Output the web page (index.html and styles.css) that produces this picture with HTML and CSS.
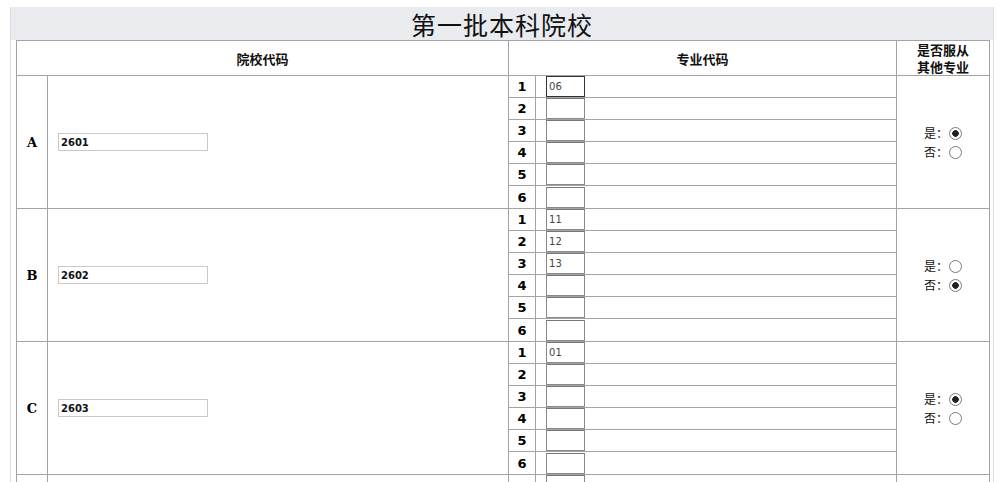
FILE: index.html
```html
<!DOCTYPE html>
<html>
<head>
    <title>第一批本科院校</title>
    <link rel="stylesheet" href="styles.css">
</head>
<body>
    <div class="panel">
        <div class="panel-title">第一批本科院校</div>
        <table class="volunteer">
            <colgroup>
                <col class="c-letter"><col class="c-school"><col class="c-num"><col class="c-major"><col class="c-obey">
            </colgroup>
            <tr class="head">
                <th colspan="2">院校代码</th>
                <th colspan="2">专业代码</th>
                <th>是否服从<br>其他专业</th>
            </tr>

            <!-- A -->
            <tr>
                <td rowspan="6" class="letter">A</td>
                <td rowspan="6" class="school"><input type="text" class="school-code" value="2601"></td>
                <td class="num">1</td>
                <td class="major"><input type="text" class="major-code focus" value="06"></td>
                <td rowspan="6" class="obey">
                    <div>是：<input type="radio" name="obeyA" checked></div>
                    <div>否：<input type="radio" name="obeyA"></div>
                </td>
            </tr>
            <tr><td class="num">2</td><td class="major"><input type="text" class="major-code"></td></tr>
            <tr><td class="num">3</td><td class="major"><input type="text" class="major-code"></td></tr>
            <tr><td class="num">4</td><td class="major"><input type="text" class="major-code"></td></tr>
            <tr><td class="num">5</td><td class="major"><input type="text" class="major-code"></td></tr>
            <tr class="last"><td class="num">6</td><td class="major"><input type="text" class="major-code"></td></tr>

            <!-- B -->
            <tr>
                <td rowspan="6" class="letter">B</td>
                <td rowspan="6" class="school"><input type="text" class="school-code" value="2602"></td>
                <td class="num">1</td>
                <td class="major"><input type="text" class="major-code" value="11"></td>
                <td rowspan="6" class="obey">
                    <div>是：<input type="radio" name="obeyB"></div>
                    <div>否：<input type="radio" name="obeyB" checked></div>
                </td>
            </tr>
            <tr><td class="num">2</td><td class="major"><input type="text" class="major-code" value="12"></td></tr>
            <tr><td class="num">3</td><td class="major"><input type="text" class="major-code" value="13"></td></tr>
            <tr><td class="num">4</td><td class="major"><input type="text" class="major-code"></td></tr>
            <tr><td class="num">5</td><td class="major"><input type="text" class="major-code"></td></tr>
            <tr class="last"><td class="num">6</td><td class="major"><input type="text" class="major-code"></td></tr>

            <!-- C -->
            <tr>
                <td rowspan="6" class="letter">C</td>
                <td rowspan="6" class="school"><input type="text" class="school-code" value="2603"></td>
                <td class="num">1</td>
                <td class="major"><input type="text" class="major-code" value="01"></td>
                <td rowspan="6" class="obey">
                    <div>是：<input type="radio" name="obeyC" checked></div>
                    <div>否：<input type="radio" name="obeyC"></div>
                </td>
            </tr>
            <tr><td class="num">2</td><td class="major"><input type="text" class="major-code"></td></tr>
            <tr><td class="num">3</td><td class="major"><input type="text" class="major-code"></td></tr>
            <tr><td class="num">4</td><td class="major"><input type="text" class="major-code"></td></tr>
            <tr><td class="num">5</td><td class="major"><input type="text" class="major-code"></td></tr>
            <tr class="last"><td class="num">6</td><td class="major"><input type="text" class="major-code"></td></tr>

            <!-- D (只露出顶部) -->
            <tr>
                <td rowspan="2" class="letter"></td>
                <td rowspan="2" class="school"></td>
                <td class="num"></td>
                <td class="major"><input type="text" class="major-code"></td>
                <td rowspan="2" class="obey"></td>
            </tr>
            <tr><td class="num"></td><td class="major"><input type="text" class="major-code"></td></tr>
        </table>
    </div>
</body>
</html>
```

FILE: styles.css
```css
body { margin: 0; background: #fff; font-family: "Noto Sans CJK SC", sans-serif; overflow: hidden; }

.panel { margin: 7px 0 0 10px; width: 982px; border-left: 1px solid #dcdee2; border-right: 1px solid #dcdee2; padding-bottom: 20px; }
.panel-title { height: 33px; background: #e9ebef; text-align: center; font-size: 25px; line-height: 35px; color: #111; letter-spacing: 1px; }

.volunteer { margin-left: 5px; width: 973px; border-collapse: collapse; table-layout: fixed; border: 1px solid #9a9a9a; }
.volunteer td, .volunteer th { border: 1px solid #a3a3a3; padding: 0; }
.c-letter { width: 31px; }
.c-school { width: 461px; }
.c-num { width: 27px; }
.c-major { width: 361px; }
.c-obey { width: 93px; }

.head th { height: 34px; font-size: 13px; font-weight: bold; color: #111; line-height: 17px; }

.volunteer td { height: 21px; }
.volunteer tr.last td { height: 22px; }
.letter { text-align: center; font-family: "DejaVu Serif", serif; font-weight: bold; font-size: 13px; }
.school { padding-left: 10px !important; }
.num { text-align: center; font-family: "DejaVu Sans", sans-serif; font-weight: bold; font-size: 13px; }
.major { padding-left: 10px !important; }

.school-code { width: 150px; height: 18px; box-sizing: border-box; border: 1px solid #c8c8c8; padding: 0 2px; margin: 0; font-family: "DejaVu Sans", sans-serif; font-weight: bold; font-size: 10px; color: #111; display: block; }
.major-code { width: 39px; height: 21px; box-sizing: border-box; border: 1px solid #8a8a8a; border-top-color: #777; padding: 0 2px; margin: 0; font-family: "DejaVu Sans", sans-serif; font-size: 10px; color: #444; display: block; }
.major-code.focus { border-color: #333; }

.obey { text-align: center; font-size: 12px; color: #111; }
.obey div { height: 19px; line-height: 19px; }
.obey input { appearance: none; -webkit-appearance: none; width: 13px; height: 13px; margin: 0 0 0 1px; vertical-align: -2px; border: 1px solid #7a7a7a; border-radius: 50%; background: #fff; box-sizing: border-box; }
.obey input:checked { background: radial-gradient(circle, #222 0, #222 3px, #fff 3.6px); }
```
